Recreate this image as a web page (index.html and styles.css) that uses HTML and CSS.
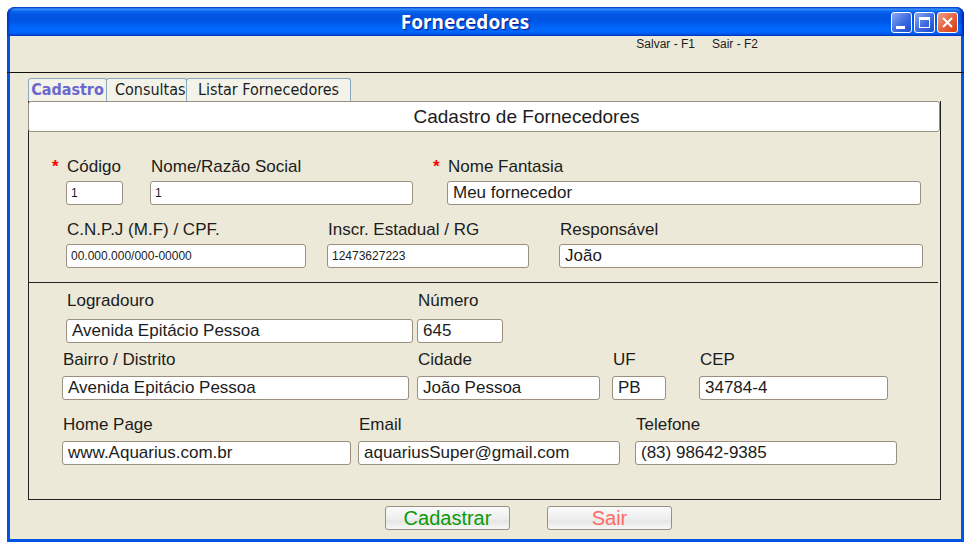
FILE: index.html
```html
<!DOCTYPE html>
<html lang="pt-BR">
<head>
<meta charset="utf-8">
<meta name="viewport" content="width=device-width, initial-scale=1">
<title>Fornecedores</title>
<link rel="stylesheet" href="styles.css">
</head>
<body>
<div class="window">
  <header class="titlebar">
    <h1 class="titlebar-text">Fornecedores</h1>
    <button type="button" class="caption" aria-label="Minimizar">
      <svg viewBox="0 0 19 19"><path d="M4 13h9v3H4z" fill="#fff"/></svg>
    </button>
    <button type="button" class="caption" aria-label="Maximizar">
      <svg viewBox="0 0 19 19"><path d="M4 4h11v11H4zM5 7v7h9V7z" fill="#fff" fill-rule="evenodd"/></svg>
    </button>
    <button type="button" class="caption caption-close" aria-label="Fechar">
      <svg viewBox="0 0 19 19"><path d="M5 5l9 9M14 5l-9 9" stroke="#fff" stroke-width="2" fill="none"/></svg>
    </button>
  </header>
  <nav class="toolbar">
    <button type="button" class="tool">Salvar - F1</button>
    <button type="button" class="tool">Sair - F2</button>
  </nav>
  <main class="content">
    <div class="tabs" role="tablist">
      <button type="button" class="tab tab-active" role="tab" aria-selected="true">Cadastro</button>
      <button type="button" class="tab tab-consult" role="tab" aria-selected="false">Consultas</button>
      <button type="button" class="tab tab-list" role="tab" aria-selected="false">Listar Fornecedores</button>
    </div>
    <form id="supplier" class="panel">
      <h2 class="panel-title">Cadastro de Fornecedores</h2>
      <div class="row row-names">
        <div class="field"><label class="required" for="codigo">Código</label><input class="small" id="codigo" value="1"></div>
        <div class="field"><label for="razao">Nome/Razão Social</label><input class="small" id="razao" value="1"></div>
        <div class="field"><label class="required" for="fantasia">Nome Fantasia</label><input id="fantasia" value="Meu fornecedor"></div>
      </div>
      <div class="row row-documents">
        <div class="field"><label for="cnpj">C.N.P.J (M.F) / CPF.</label><input class="small" id="cnpj" value="00.000.000/000-00000"></div>
        <div class="field"><label for="inscricao">Inscr. Estadual / RG</label><input class="small" id="inscricao" value="12473627223"></div>
        <div class="field"><label for="responsavel">Responsável</label><input id="responsavel" value="João"></div>
      </div>
      <hr class="divider">
      <div class="row row-street">
        <div class="field"><label for="logradouro">Logradouro</label><input id="logradouro" value="Avenida Epitácio Pessoa"></div>
        <div class="field"><label for="numero">Número</label><input id="numero" value="645"></div>
      </div>
      <div class="row row-city">
        <div class="field"><label for="bairro">Bairro / Distrito</label><input id="bairro" value="Avenida Epitácio Pessoa"></div>
        <div class="field"><label for="cidade">Cidade</label><input id="cidade" value="João Pessoa"></div>
        <div class="field"><label for="uf">UF</label><input id="uf" value="PB"></div>
        <div class="field"><label for="cep">CEP</label><input id="cep" value="34784-4"></div>
      </div>
      <div class="row row-contact">
        <div class="field"><label for="homepage">Home Page</label><input id="homepage" value="www.Aquarius.com.br"></div>
        <div class="field"><label for="email">Email</label><input id="email" value="aquariusSuper@gmail.com"></div>
        <div class="field"><label for="telefone">Telefone</label><input id="telefone" value="(83) 98642-9385"></div>
      </div>
    </form>
    <div class="actions">
      <button type="submit" form="supplier" class="action action-save">Cadastrar</button>
      <button type="button" class="action action-exit">Sair</button>
    </div>
  </main>
</div>
</body>
</html>
```
FILE: styles.css
```css
* {
  box-sizing: border-box;
}

body {
  margin: 0;
  padding: 7px 11px 3px 7px;
  background: #fff;
  color: #1c1c1c;
  font: 17px/22px "Liberation Sans", Arial, sans-serif;
}

button,
input {
  margin: 0;
  color: inherit;
  font: inherit;
}

.window {
  display: flex;
  flex-direction: column;
  min-height: calc(100vh - 10px);
  border-bottom: 3px solid #0054e3;
  border-radius: 8px 8px 0 0;
  background: linear-gradient(90deg, #0054e3 3px, #ece9d8 3px, #ece9d8 calc(100% - 3px), #0054e3 calc(100% - 3px));
}

.titlebar {
  display: flex;
  align-items: center;
  gap: 2px;
  height: 29px;
  padding: 2px 6px 0 34px;
  border-radius: 8px 8px 0 0;
  background: linear-gradient(#0850cc 0, #3d95ff 2px, #0a68f0 4px, #0055e1 8px, #0054e3 14px, #0066fb 20px, #0067ff 25px, #0050dc 28px, #0041c4 29px);
  box-shadow: inset 2px 0 2px #0036c4, inset -2px 0 2px #0024b0;
}

.titlebar-text {
  flex: 1;
  margin: 0;
  padding-bottom: 2px;
  color: #fff;
  font: bold 19px/24px "Noto Sans", "Open Sans", sans-serif;
  text-align: center;
  text-shadow: 1px 1px 1px #0a1883;
}

.caption {
  width: 21px;
  height: 21px;
  padding: 0;
  border: 1px solid #fff;
  border-radius: 3px;
  background: linear-gradient(135deg, #8aa9f5, #3c6be0 55%, #1c4cd0);
}

.caption-close {
  background: linear-gradient(135deg, #f0a08a, #e2603c 55%, #d83c0c);
}

.caption svg {
  display: block;
}

.toolbar {
  display: flex;
  align-items: flex-start;
  justify-content: flex-end;
  gap: 17px;
  height: 37px;
  padding-right: 206px;
  border-bottom: 1px solid #111;
}

.tool {
  padding: 0;
  border: 0;
  background: none;
  font-size: 12px;
  line-height: 16px;
  white-space: nowrap;
}

.content {
  display: flex;
  flex: 1;
  flex-direction: column;
  padding: 5px 23px 9px 21px;
}

.tabs {
  display: flex;
}

.tab {
  height: 23px;
  margin-right: -1px;
  padding: 0 2px;
  border: 1px solid #8ba9bc;
  border-bottom: 0;
  border-radius: 3px 3px 0 0;
  background: #f3f3ea;
  font: 16px/22px "DejaVu Sans Condensed", "DejaVu Sans", sans-serif;
  text-align: center;
  white-space: nowrap;
}

.tab-active {
  width: 79px;
  color: #6a67ce;
  font-weight: bold;
}

.tab-consult {
  width: 81px;
  padding-left: 8px;
}

.tab-list {
  width: 165px;
}

.panel {
  flex: 1;
  border: 1px solid #222;
  border-top: 0;
}

.panel-title {
  margin: 0 0 24px -1px;
  padding: 0 0 0 85px;
  border: 1px solid #989082;
  border-radius: 3px;
  background: #fff;
  font-size: 19px;
  font-weight: normal;
  line-height: 29px;
  text-align: center;
}

/* Odd tracks hold the fields, even tracks the space between them. */
.row {
  display: grid;
}

.field:nth-child(2) {
  grid-column: 3;
}

.field:nth-child(3) {
  grid-column: 5;
}

.field:nth-child(4) {
  grid-column: 7;
}

.row-names {
  grid-template-columns: 57fr 27px 263fr 34px 474fr;
  margin: 0 19px 14px 37px;
}

.row-documents {
  grid-template-columns: 240fr 21px 202fr 30px 364fr;
  margin: 0 17px 14px 37px;
}

.row-street {
  grid-template-columns: 347fr 4px 86fr 437fr;
  margin: 7px 0 6px 37px;
}

.row-city {
  grid-template-columns: 347fr 8px 183fr 12px 54fr 33px 189fr;
  margin: 0 52px 14px 33px;
}

.row-contact {
  grid-template-columns: 289fr 7px 262fr 15px 262fr;
  margin: 0 43px 34px 33px;
}

.field {
  display: flex;
  flex-direction: column;
  gap: 3px;
  min-width: 0;
}

.row-street .field {
  gap: 7px;
}

.row-city .field,
.row-contact .field {
  gap: 5px;
}

.field label {
  padding-left: 1px;
  white-space: nowrap;
}

.required::before {
  display: inline-block;
  width: 15px;
  margin-left: -15px;
  color: #f00;
  font-weight: bold;
  content: "*";
}

.field input {
  width: 100%;
  height: 24px;
  padding: 0 5px 1px;
  border: 1px solid #9a8f80;
  border-radius: 3px;
  background: #fff;
}

.field .small {
  padding: 0 4px;
  font-size: 12px;
}

.divider {
  height: 1px;
  margin: 0 2px 0 0;
  border: 0;
  background: #222;
}

.actions {
  display: flex;
  justify-content: center;
  gap: 37px;
  padding: 6px 0 0 88px;
}

.action {
  width: 125px;
  height: 24px;
  padding: 0;
  border: 1px solid #9a8f80;
  border-radius: 3px;
  background: linear-gradient(#fafafa, #f0f0f0 50%, #e6e6e6 65%, #f8f8f8);
  font-size: 20px;
  line-height: 22px;
}

.action-save {
  color: #0a9a0a;
}

.action-exit {
  color: #ff6a64;
}
```
